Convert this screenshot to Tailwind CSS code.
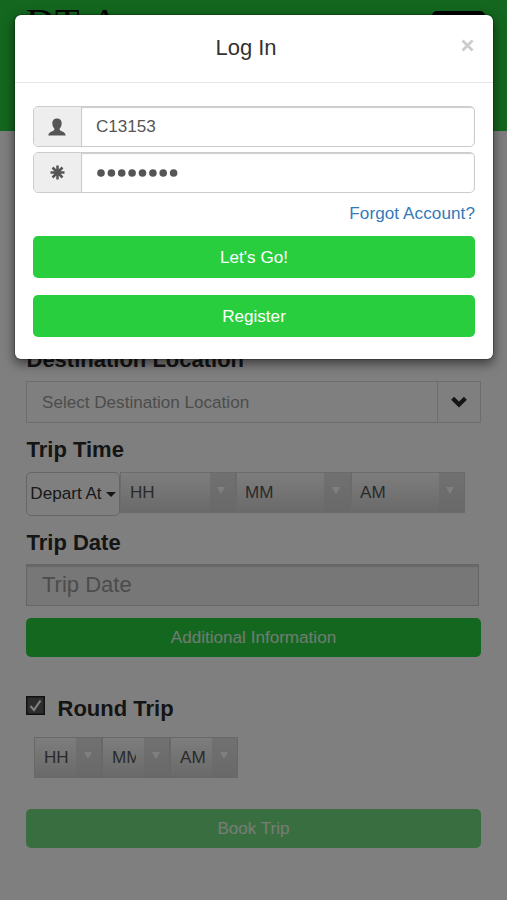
<!DOCTYPE html>
<html lang="en">
<head>
<meta charset="utf-8">
<title>Log In</title>
<script src="https://cdn.jsdelivr.net/npm/@tailwindcss/browser@4"></script>
</head>
<body class="relative h-[900px] w-[507px] overflow-hidden bg-white font-['Liberation_Sans',Arial,sans-serif] text-[17.1px] text-[#333]">
  <header class="flex h-[131px] items-start justify-between bg-[#29ce3f] pl-[26px] pr-[22px]">
    <div class="mt-[3px] font-['Liberation_Serif',serif] text-[40px] leading-[40px] text-black [word-spacing:4px]">DT A</div>
    <div class="mt-[11px] h-[42px] w-[53px] rounded-[5px] bg-black"></div>
  </header>
  <main class="pl-[26px] pr-[26px] pt-[215px]">
    <h2 class="h-[28px] pl-[0.5px] text-[22px] leading-[28px] font-bold text-[#2a2a2a]">Destination Location</h2>
    <div class="mt-[7px] flex h-[42px] border border-[#dadada] text-[#999]">
      <div class="flex flex-1 items-center pt-[1px] pl-[15px]">Select Destination Location</div>
      <div class="flex w-[43px] items-center justify-center border-l border-[#dadada]">
        <svg class="h-[12px] w-[16px]" viewBox="0 0 16 12"><path d="M1.600 2.200 8 8.600l6.400-6.400" fill="none" stroke="#2a2a2a" stroke-width="4.200"/></svg>
      </div>
    </div>
    <h2 class="mt-[13px] h-[28px] pl-[0.5px] text-[22px] leading-[28px] font-bold text-[#2a2a2a]">Trip Time</h2>
    <div class="mt-[8px] flex h-[44px] items-start">
      <div class="flex h-[44px] w-[94px] items-center justify-center gap-[4px] rounded-[5px] border border-[#ccc] whitespace-nowrap">
        <span>Depart At</span>
        <svg class="h-[5px] w-[10px] shrink-0" viewBox="0 0 10 5"><path d="M0 0h10L5 5z" fill="#2a2a2a"/></svg>
      </div>
      <div class="flex h-[41px] w-[116px] border border-[#d6d6d6] bg-linear-to-b from-[#e2e2e2] to-[#d2d2d2]">
        <div class="flex w-[89px] items-center bg-linear-to-b from-[#fbfbfb] to-[#d4d4d4] pl-[9px] text-[#555]">HH</div>
        <div class="flex flex-1 items-center justify-center pr-[3px] pb-[4px]"><svg class="h-[7px] w-[8px]" viewBox="0 0 8 7"><path d="M0 0h8L4 7z" fill="#fff"/></svg></div>
      </div>
      <div class="flex h-[41px] w-[115px] border border-[#d6d6d6] bg-linear-to-b from-[#e2e2e2] to-[#d2d2d2]">
        <div class="flex w-[87px] items-center bg-linear-to-b from-[#fbfbfb] to-[#d4d4d4] pl-[8px] text-[#555]">MM</div>
        <div class="flex flex-1 items-center justify-center pr-[2px] pb-[4px]"><svg class="h-[7px] w-[8px]" viewBox="0 0 8 7"><path d="M0 0h8L4 7z" fill="#fff"/></svg></div>
      </div>
      <div class="flex h-[41px] w-[114px] border border-[#d6d6d6] bg-linear-to-b from-[#e2e2e2] to-[#d2d2d2]">
        <div class="flex w-[87px] items-center bg-linear-to-b from-[#fbfbfb] to-[#d4d4d4] pl-[8px] text-[#555]">AM</div>
        <div class="flex flex-1 items-center justify-center pr-[4px] pb-[4px]"><svg class="h-[7px] w-[8px]" viewBox="0 0 8 7"><path d="M0 0h8L4 7z" fill="#fff"/></svg></div>
      </div>
    </div>
    <h2 class="mt-[13px] h-[28px] pl-[0.5px] text-[22px] leading-[28px] font-bold text-[#2a2a2a]">Trip Date</h2>
    <div class="mt-[7px] flex h-[42px] w-[453px] items-center border border-[#ccc] bg-[#eee] pb-[1px] pl-[15px] text-[22px] text-[#999] shadow-[inset_0_2px_1px_rgba(0,0,0,0.12)]">Trip Date</div>
    <div class="mt-[12px] flex h-[39px] items-center justify-center rounded-[5px] bg-[#29ce3f] pt-[1px] text-white/85">Additional Information</div>
    <div class="mt-[37px] flex h-[28px] items-center">
      <svg class="mb-[6px] h-[19px] w-[19px]" viewBox="0 0 19 19"><rect width="19" height="19" fill="#222"/><rect x="1.500" y="1.500" width="16" height="16" fill="#5a5a5a"/><path d="M4.500 10l3.500 4 6.500-9.500" fill="none" stroke="#fff" stroke-width="2.200"/></svg>
      <h2 class="ml-[12.500px] pt-[1px] text-[22px] leading-[28px] font-bold text-[#2a2a2a]">Round Trip</h2>
    </div>
    <div class="mt-[15px] flex h-[41px] pl-[8px]">
      <div class="flex w-[68px] border border-[#d0d0d0] bg-linear-to-b from-[#e2e2e2] to-[#d2d2d2]">
        <div class="flex w-[41px] items-center bg-linear-to-b from-[#fbfbfb] to-[#d4d4d4] pl-[9px] text-[#555]">HH</div>
        <div class="flex flex-1 items-center justify-center pr-[1px] pb-[4px]"><svg class="h-[7px] w-[8px]" viewBox="0 0 8 7"><path d="M0 0h8L4 7z" fill="#fff"/></svg></div>
      </div>
      <div class="flex w-[68px] border border-[#d0d0d0] bg-linear-to-b from-[#e2e2e2] to-[#d2d2d2]">
        <div class="flex w-[41px] items-center bg-linear-to-b from-[#fbfbfb] to-[#d4d4d4] pl-[9px] text-[#555]"><span class="w-[24px] overflow-hidden">MM</span></div>
        <div class="flex flex-1 items-center justify-center pr-[2px] pb-[4px]"><svg class="h-[7px] w-[8px]" viewBox="0 0 8 7"><path d="M0 0h8L4 7z" fill="#fff"/></svg></div>
      </div>
      <div class="flex w-[68px] border border-[#d0d0d0] bg-linear-to-b from-[#e2e2e2] to-[#d2d2d2]">
        <div class="flex w-[41px] items-center bg-linear-to-b from-[#fbfbfb] to-[#d4d4d4] pl-[9px] text-[#555]">AM</div>
        <div class="flex flex-1 items-center justify-center pr-[2px] pb-[4px]"><svg class="h-[7px] w-[8px]" viewBox="0 0 8 7"><path d="M0 0h8L4 7z" fill="#fff"/></svg></div>
      </div>
    </div>
    <div class="mt-[31px] flex h-[39px] items-center justify-center rounded-[5px] bg-[#29ce3f] text-white/85 opacity-65">Book Trip</div>
  </main>

  <div class="absolute inset-0 bg-black/50 px-[14px] pt-[14px]">
    <section class="h-[346px] w-[480px] rounded-[7px] border border-black/20 bg-white bg-clip-padding shadow-[0_4px_11px_rgba(0,0,0,0.5)]">
      <div class="relative flex h-[68px] items-center justify-center border-b border-[#e5e5e5] pr-[16px] pb-[3px] text-[22px]">
        <h1>Log In</h1>
        <svg class="absolute top-[24px] right-[19px] h-[13px] w-[13px]" viewBox="0 0 13 13"><path d="M1.500 1.500l10 10M11.500 1.500l-10 10" stroke="#ccc" stroke-width="2.800"/></svg>
      </div>
      <div class="px-[18px] pt-[23px]">
        <div class="flex h-[41px] overflow-hidden rounded-[5px] border border-[#ccc] text-[#555]">
          <div class="flex w-[48px] items-center justify-center border-r border-[#ccc] bg-[#eee] pr-[1px]">
            <svg class="h-[18px] w-[18px]" viewBox="0 0 18 18"><path d="M9 0.500c3 0 4.700 2 4.700 4.700 0 2.200-.8 4.100-2 5.200v1.600c.4 1 5.900 1.600 6 5.500H.300c.1-3.900 5.600-4.500 6-5.500v-1.600c-1.200-1.100-2-3-2-5.200C4.300 2.500 6 .5 9 .5z" fill="#555"/></svg>
          </div>
          <div class="flex flex-1 items-center pl-[14px] shadow-[inset_0_1px_1px_rgba(0,0,0,0.2)]">C13153</div>
        </div>
        <div class="mt-[5px] flex h-[41px] overflow-hidden rounded-[5px] border border-[#ccc] text-[#555]">
          <div class="flex w-[48px] items-center justify-center border-r border-[#ccc] bg-[#eee] pr-[1px] pb-[1px]">
            <svg class="h-[15px] w-[15px]" viewBox="0 0 15 15"><path d="M7.500 .5v14M.5 7.500h14M2.500 2.500l10 10M12.500 2.500l-10 10" stroke="#555" stroke-width="2.500"/></svg>
          </div>
          <div class="flex flex-1 items-center pl-[15px] shadow-[inset_0_1px_1px_rgba(0,0,0,0.2)]">
            <svg class="h-[8px] w-[81px]" viewBox="0 0 81 8" fill="#555"><circle cx="4" cy="4" r="3.800"/><circle cx="14.400" cy="4" r="3.800"/><circle cx="24.700" cy="4" r="3.800"/><circle cx="35.100" cy="4" r="3.800"/><circle cx="45.500" cy="4" r="3.800"/><circle cx="55.900" cy="4" r="3.800"/><circle cx="66.200" cy="4" r="3.800"/><circle cx="76.600" cy="4" r="3.800"/></svg>
          </div>
        </div>
        <div class="mt-[8px] h-[26px] text-right leading-[26px] tracking-[0.08px] text-[#337ab7]">Forgot Account?</div>
        <div class="mt-[9px] flex h-[42px] items-center justify-center rounded-[5px] bg-[#29ce3f] pt-[1px] text-white">Let's Go!</div>
        <div class="mt-[17px] flex h-[42px] items-center justify-center rounded-[5px] bg-[#29ce3f] pt-[1px] text-white">Register</div>
      </div>
    </section>
  </div>
</body>
</html>
